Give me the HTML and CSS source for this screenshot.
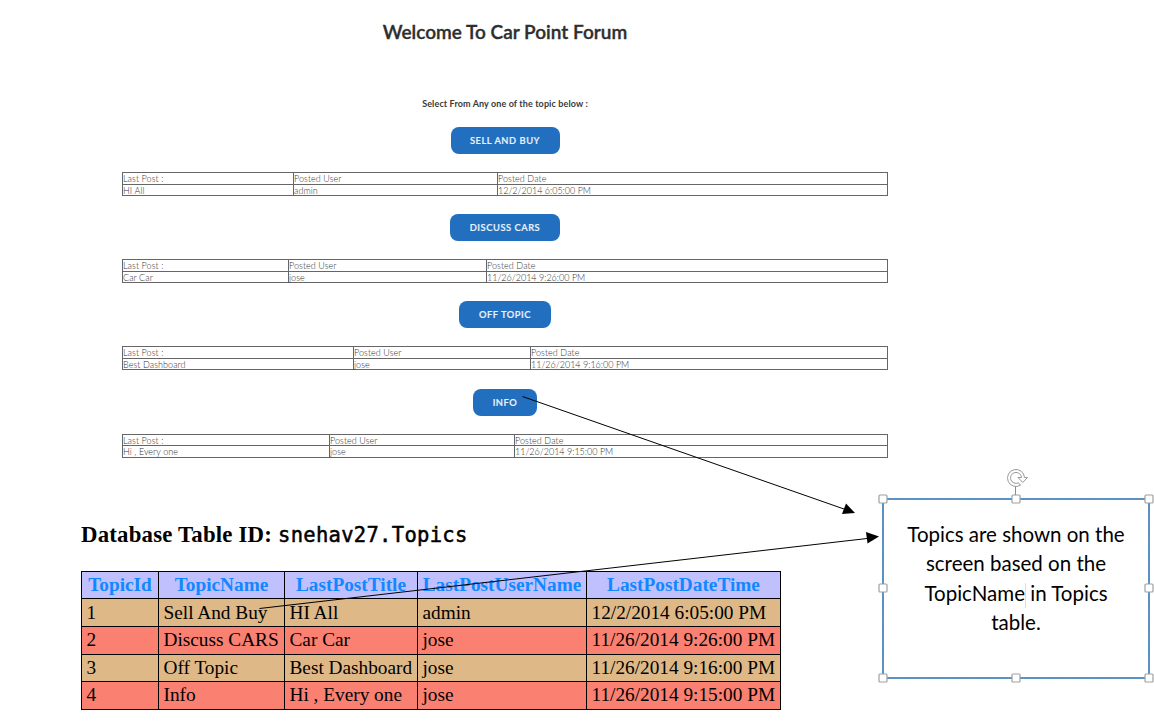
FILE: index.html
```html
<!DOCTYPE html>
<html lang="en">
<head>
<meta charset="utf-8">
<title>Car Point Forum</title>
<link rel="stylesheet" href="styles.css">
</head>
<body>
<main class="page">
  <section class="forum">
    <h1 class="title"><span>Welcome To Car Point Forum</span></h1>
    <p class="prompt"><span>Select From Any one of the topic below :</span></p>

    <div class="topic">
      <a class="button sell">SELL AND BUY</a>
      <table class="posts">
        <colgroup><col style="width:171px"><col style="width:204px"><col></colgroup>
        <tr><td>Last Post :</td><td>Posted User</td><td>Posted Date</td></tr>
        <tr><td>HI All</td><td>admin</td><td class="date">12/2/2014 6:05:00 PM</td></tr>
      </table>
    </div>
    <div class="topic">
      <a class="button cars">DISCUSS CARS</a>
      <table class="posts">
        <colgroup><col style="width:166px"><col style="width:198px"><col></colgroup>
        <tr><td>Last Post :</td><td>Posted User</td><td>Posted Date</td></tr>
        <tr><td>Car Car</td><td>jose</td><td class="date">11/26/2014 9:26:00 PM</td></tr>
      </table>
    </div>
    <div class="topic">
      <a class="button off">OFF TOPIC</a>
      <table class="posts">
        <colgroup><col style="width:231px"><col style="width:177px"><col></colgroup>
        <tr><td>Last Post :</td><td>Posted User</td><td>Posted Date</td></tr>
        <tr><td>Best Dashboard</td><td>jose</td><td class="date">11/26/2014 9:16:00 PM</td></tr>
      </table>
    </div>
    <div class="topic">
      <a class="button info">INFO</a>
      <table class="posts">
        <colgroup><col style="width:207px"><col style="width:185px"><col></colgroup>
        <tr><td>Last Post :</td><td>Posted User</td><td>Posted Date</td></tr>
        <tr><td>Hi , Every one</td><td>jose</td><td class="date">11/26/2014 9:15:00 PM</td></tr>
      </table>
    </div>
  </section>

  <section class="database">
    <h2 class="db-title">Database Table ID: <code>snehav27.Topics</code></h2>
    <table class="records">
      <colgroup><col style="width:77px"><col style="width:126px"><col style="width:133px"><col style="width:169px"><col></colgroup>
      <tr><th>TopicId</th><th>TopicName</th><th>LastPostTitle</th><th>LastPostUserName</th><th>LastPostDateTime</th></tr>
      <tr><td>1</td><td>Sell And Buy</td><td>HI All</td><td>admin</td><td>12/2/2014 6:05:00 PM</td></tr>
      <tr><td>2</td><td>Discuss CARS</td><td>Car Car</td><td>jose</td><td>11/26/2014 9:26:00 PM</td></tr>
      <tr><td>3</td><td>Off Topic</td><td>Best Dashboard</td><td>jose</td><td>11/26/2014 9:16:00 PM</td></tr>
      <tr><td>4</td><td>Info</td><td>Hi , Every one</td><td>jose</td><td>11/26/2014 9:15:00 PM</td></tr>
    </table>
  </section>

  <aside class="callout">
    <p>Topics are shown on the<br>screen based on the<br>TopicName<span class="caret"></span> in Topics<br>table.</p>
  </aside>

  <svg class="overlay" width="1154" height="726" viewBox="0 0 1154 726">
    <!-- arrows -->
    <g stroke="#000" stroke-width="1" fill="none">
      <path d="M522.5 396.5L844 509"/>
      <path d="M259.500 608.500L867 538.500"/>
    </g>
    <path d="M855 513L842 514L846 503.500Z"/>
    <path d="M879 536.500L867.500 543.500L866 532Z"/>
    <!-- selection frame -->
    <rect x="883" y="499" width="266" height="179" fill="none" stroke="#4a94d4" stroke-width="2"/>
    <rect x="883" y="499" width="266" height="179" fill="none" stroke="#8d8d93" stroke-width="1" stroke-dasharray="1.500 1.500"/>
    <path d="M1015.500 486V495" stroke="#8a8a8a"/>
    <g fill="#fff" stroke="#a0a0a0" stroke-width="1.200">
      <rect x="879" y="495" width="8" height="8" rx="1"/>
      <rect x="1012" y="495" width="8" height="8" rx="1"/>
      <rect x="1145" y="495" width="8" height="8" rx="1"/>
      <rect x="879" y="584" width="8" height="8" rx="1"/>
      <rect x="1145" y="584" width="8" height="8" rx="1"/>
      <rect x="879" y="674" width="8" height="8" rx="1"/>
      <rect x="1012" y="674" width="8" height="8" rx="1"/>
      <rect x="1145" y="674" width="8" height="8" rx="1"/>
    </g>
    <!-- rotate handle -->
    <path d="M1020.500 485.200A8.500 8.500 0 1 1 1024.500 477.500H1027.500L1022.800 482.500L1018 477.500H1021.500A5.500 5.500 0 1 0 1018.500 482.800Z" fill="#fff" stroke="#999" stroke-width="1"/>
  </svg>
</main>
</body>
</html>
```
FILE: styles.css
```css
* { box-sizing: border-box; }
body { margin: 0; background: #fff; color: #000; }
.page {
  position: relative;
  width: 1154px;
  height: 726px;
  overflow: hidden;
}
.forum {
  width: 766px;
  margin-left: 122px;
  padding-top: 18px;
  font-family: Lato, sans-serif;
  text-align: center;
}
.title {
  margin: 0;
  font-size: 19px;
  line-height: 28px;
  font-weight: 600;
  color: #2e2e2e;
  -webkit-text-stroke: .35px #2e2e2e;
}
.prompt {
  margin: 50px 0 0;
  padding-bottom: 15px;
  font-size: 9px;
  line-height: 16px;
  height: 31px;
  font-weight: 700;
  letter-spacing: .11px;
  color: #3a3a3a;
}
.topic {
  display: flex;
  flex-direction: column;
  align-items: center;
  height: 87.200px;
}
.button {
  height: 27px;
  border-radius: 8px;
  background: #226fbf;
  color: #e9f1fa;
  font-size: 9.300px;
  line-height: 28.500px;
  font-weight: 600;
  letter-spacing: .55px;
  -webkit-text-stroke: .2px #e9f1fa;
}
.sell { width: 109px; }
.cars { width: 110px; }
.off { width: 92px; }
.info { width: 64px; }
.posts {
  width: 766px;
  margin-top: 18px;
  table-layout: fixed;
  border-collapse: collapse;
  font-size: 9px;
  line-height: 10px;
  font-weight: 300;
  letter-spacing: .06px;
  color: #333;
  text-align: left;
}
.posts td {
  height: 11.500px;
  padding: 1px 0 0;
  line-height: 9.500px;
  border: 1px solid #666;
  white-space: nowrap;
}
.posts .date { letter-spacing: 0; }
.database {
  width: 700px;
  margin: 45px 0 0 81px;
  font-family: "Liberation Serif", serif;
}
.db-title {
  margin: 0 0 22px;
  font-size: 22.800px;
  line-height: 28px;
  letter-spacing: .2px;
  white-space: nowrap;
}
.db-title code {
  font-family: "DejaVu Sans Mono", monospace;
  font-size: 20.500px;
  font-weight: 400;
  letter-spacing: .300px;
  -webkit-text-stroke: .5px #000;
}
.records {
  width: 700px;
  table-layout: fixed;
  border-collapse: collapse;
  font-size: 19.300px;
  line-height: 22px;
}
.records th, .records td {
  height: 27.600px;
  padding: 0 0 0 5px;
  border: 1px solid #000;
  text-align: left;
  white-space: nowrap;
}
.records td { padding-left: 4.500px; }
.records th {
  padding: 0;
  background: #c0c0ff;
  color: #1188ff;
  text-align: center;
}
.records tr:nth-child(even) { background: #deb887; }
.records tr:nth-child(odd) { background: #fa8072; }
.callout {
  position: absolute;
  left: 883px;
  top: 499px;
  width: 266px;
  height: 179px;
  padding-top: 21px;
  font-family: Lato, sans-serif;
  font-size: 20.500px;
  line-height: 29.300px;
  text-align: center;
}
.callout p { margin: 0; }
.caret {
  display: inline-block;
  width: 1px;
  height: 25px;
  margin-right: -1px;
  vertical-align: -7px;
  background: #ddd;
}
.overlay { position: absolute; left: 0; top: 0; }
```
